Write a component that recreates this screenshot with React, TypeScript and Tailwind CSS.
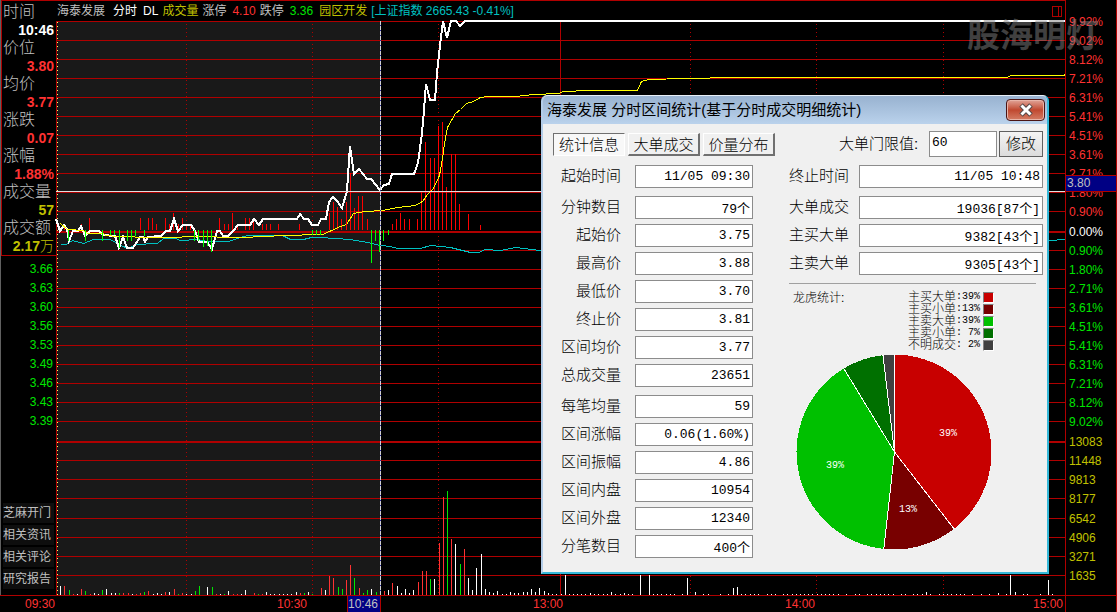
import React from 'react';

type Bar = [number, number];

const RED = '#b00000';

/* ---------- chart data ---------- */

const gridLines = [
  21, 40, 59, 78, 97, 116, 135, 154, 173, 192, 211, 250, 269, 288, 307, 326, 345, 364, 383, 402, 421,
  460, 479, 498, 518, 537, 556, 575,
];

const priceLine =
  '56,219 60,231 64,225 67,229 69,241 73,231 78,231 81,226 85,236 90,231 99,231 103,235 115,236 119,248 123,237 127,248 133,248 140,237 143,237 145,242 148,237 161,236 166,231 170,231 174,219 178,231 183,225 191,225 195,231 199,242 207,242 212,249 217,231 220,231 223,236 228,236 233,231 238,225 250,225 254,219 259,225 263,219 297,219 300,214 304,219 308,219 312,225 318,225 321,219 326,219 329,202 333,197 337,201 342,208 347,191 350,146 354,174 359,169 367,179 371,179 380,190 384,185 389,184 392,174 414,174 418,163 422,133 424,110 426,84 430,100 435,100 437,73 441,37 443,21 447,38 451,21 456,21 460,26 465,21 1065,21';

const averageLine =
  '60,223 67,229 83,230 87,233 103,233 105,235 118,236 150,237 170,237 193,236 240,237 265,236 282,235 322,234 329,231 340,226 346,224 353,213 365,211 382,210 397,207 415,205 422,201 427,194 433,188 439,175 442,158 444,143 447,127 455,113 460,109 466,103 473,101 480,97 487,96 515,96 533,94 558,93 563,91 588,90 637,90 641,81 648,79 685,78 735,77 1007,77 1010,75 1063,75 1065,74';

const indexLine =
  '60,244 66,244 72,240 83,243 93,239 110,239 120,245 128,248 135,244 157,243 163,238 175,238 180,240 197,239 207,241 228,241 237,238 247,235 282,235 290,239 303,239 311,237 320,237 350,239 367,242 380,245 390,246 397,248 420,248 430,245 450,247 470,252 478,252 485,249 500,250 515,247 540,250 1048,240 1065,239';

// x, top
const upBars: Bar[] = [
  [64, 224], [81, 224], [89, 218], [140, 218], [148, 218], [152, 218], [156, 224], [165, 218], [169, 224],
  [173, 213], [178, 224], [182, 218], [186, 224], [190, 224], [219, 218], [224, 224], [228, 224], [232, 213],
  [237, 224], [245, 218], [249, 218], [253, 218], [262, 224], [266, 224], [270, 224], [278, 224], [299, 224],
  [329, 213], [333, 202], [337, 207], [341, 219], [346, 202], [350, 173], [354, 208], [358, 196], [362, 196],
  [367, 219], [392, 224], [396, 219], [400, 213], [404, 219], [409, 219], [417, 219], [421, 192], [425, 142],
  [430, 158], [434, 158], [438, 126], [442, 122], [446, 187], [451, 154], [455, 154], [459, 204], [468, 214],
  [480, 225],
];

// x, bottom
const downBars: Bar[] = [
  [68, 241], [85, 241], [102, 241], [110, 235], [114, 235], [119, 248], [127, 241], [131, 241], [135, 236],
  [144, 236], [194, 241], [198, 241], [203, 247], [207, 246], [211, 252], [312, 235], [316, 235], [320, 235],
  [371, 263], [375, 241], [379, 252], [383, 241], [388, 235],
];

const volume: Record<string, Bar[]> = {
  '#ff3232': [
    [64, 586], [73, 594], [81, 589], [90, 594], [123, 593], [128, 593], [136, 594], [140, 593], [148, 591],
    [165, 592], [174, 589], [182, 593], [216, 594], [233, 594], [237, 594], [254, 593], [262, 594], [300, 593],
    [321, 588], [329, 576], [333, 578], [346, 580], [350, 565], [359, 588], [384, 591], [392, 583], [418, 582],
    [422, 571], [426, 571], [439, 543], [443, 497], [451, 539], [464, 549],
  ],
  '#00e600': [
    [69, 590], [85, 591], [102, 590], [119, 593], [144, 592], [178, 594], [195, 591], [199, 586], [212, 587],
    [224, 594], [258, 594], [304, 593], [312, 594], [338, 587], [342, 589], [354, 578], [363, 593], [367, 590],
    [376, 592], [430, 579], [447, 491], [460, 564],
  ],
  '#ffffff': [
    [60, 586], [77, 594], [94, 593], [98, 594], [106, 589], [111, 593], [115, 593], [132, 594], [153, 594],
    [157, 593], [161, 594], [169, 592], [186, 594], [191, 594], [207, 587], [220, 594], [228, 591], [241, 594],
    [245, 590], [266, 592], [270, 594], [274, 594], [279, 594], [283, 594], [287, 594], [291, 594], [296, 592],
    [308, 592], [325, 590], [371, 589], [388, 590], [397, 586], [401, 593], [405, 589], [409, 593], [413, 590],
    [434, 579], [455, 544], [468, 578], [472, 590], [476, 568], [481, 554], [485, 589], [489, 592], [493, 593],
    [497, 591], [502, 594], [506, 594], [510, 592], [514, 593], [518, 593], [523, 592], [527, 592], [531, 589],
    [535, 592], [539, 588], [544, 591], [548, 593], [565, 575], [590, 593], [611, 592], [624, 593], [640, 575],
    [649, 575], [687, 578], [695, 592], [733, 588], [737, 587], [926, 592], [998, 593], [1010, 575],
    [1015, 592], [1048, 580],
  ],
};

const ticks = [
  552, 556, 561, 569, 573, 577, 581, 585, 594, 598, 603, 607, 615, 620, 628, 632, 653, 657, 661, 666, 670, 674,
  682, 703, 708, 720, 728, 741, 745, 750, 754, 758, 767, 771, 775, 783, 787, 792, 796, 800, 804, 808, 812, 817,
  821, 825, 829, 833, 838, 846, 855, 859, 867, 871, 876, 880, 884, 888, 893, 901, 905, 913, 917, 922, 930, 939,
  943, 947, 951, 956, 960, 964, 972, 981, 989, 1006, 1023, 1027, 1040, 1052,
];

/* ---------- labels ---------- */

const quote = [
  { label: '时间', value: '10:46', color: 'text-white' },
  { label: '价位', value: '3.80', color: 'text-[#ff3232]' },
  { label: '均价', value: '3.77', color: 'text-[#ff3232]' },
  { label: '涨跌', value: '0.07', color: 'text-[#ff3232]' },
  { label: '涨幅', value: '1.88%', color: 'text-[#ff3232]' },
  { label: '成交量', value: '57', color: 'text-[#c0c000]' },
  { label: '成交额', value: '2.17', unit: '万', color: 'text-[#c0c000]' },
];

const lowPrices = ['3.66', '3.63', '3.60', '3.56', '3.53', '3.49', '3.46', '3.43', '3.39'];
const links = ['芝麻开门', '相关资讯', '相关评论', '研究报告'];

const upPercents = ['9.92%', '9.02%', '8.12%', '7.21%', '6.31%', '5.41%', '4.51%', '3.61%', '2.71%', '1.80%', '0.90%'];
const downPercents = ['0.90%', '1.80%', '2.71%', '3.61%', '4.51%', '5.41%', '6.31%', '7.21%', '8.12%', '9.02%'];

const leftGroups: [string, string][][] = [
  [['起始时间', '11/05 09:30']],
  [
    ['分钟数目', '79个'],
    ['起始价', '3.75'],
    ['最高价', '3.88'],
    ['最低价', '3.70'],
    ['终止价', '3.81'],
    ['区间均价', '3.77'],
    ['总成交量', '23651'],
  ],
  [
    ['每笔均量', '59'],
    ['区间涨幅', '0.06(1.60%)'],
    ['区间振幅', '4.86'],
    ['区间内盘', '10954'],
    ['区间外盘', '12340'],
    ['分笔数目', '400个'],
  ],
];

const rightGroups: [string, string][][] = [
  [['终止时间', '11/05 10:48']],
  [
    ['大单成交', '19036[87个]'],
    ['主买大单', '9382[43个]'],
    ['主卖大单', '9305[43个]'],
  ],
];

const legend = [
  { label: '主买大单', value: ':39%', swatch: 'bg-[#c80000]' },
  { label: '主买小单', value: ':13%', swatch: 'bg-[#780000]' },
  { label: '主卖大单', value: ':39%', swatch: 'bg-[#00c000]' },
  { label: '主卖小单', value: ': 7%', swatch: 'bg-[#007000]' },
  { label: '不明成交', value: ': 2%', swatch: 'bg-[#404040]' },
];

const slices = [
  { from: 0, to: 142, color: '#c80000' },
  { from: 142, to: 186, color: '#780000' },
  { from: 186, to: 329, color: '#00c000' },
  { from: 329, to: 353.5, color: '#007000' },
  { from: 353.5, to: 360, color: '#404040' },
];

/* ---------- chart ---------- */

const Chart: React.FC = () => (
  <svg
    className="block w-full h-[574px] overflow-visible"
    viewBox="56 21 1009 574"
    preserveAspectRatio="none"
    shapeRendering="crispEdges"
    fill="none"
  >
    <rect x="57" y="21" width="323" height="574" fill="#191919" />

    {gridLines.map((y) => (
      <rect key={y} x="56" y={y} width="1009" height="1" fill={RED} />
    ))}
    <rect x="56" y="231" width="1009" height="2" fill={RED} />
    <rect x="56" y="441" width="1009" height="2" fill={RED} />

    {[186, 312, 438, 690, 816, 943].map((x) => (
      <path key={x} d={`M${x + 0.5} 24V595`} stroke={RED} strokeDasharray="1 3" />
    ))}
    <rect x="56" y="21" width="1" height="574" fill={RED} />
    <rect x="560" y="21" width="1" height="574" fill={RED} />
    <path d="M57.5 22V595" stroke="#ffff64" strokeDasharray="1 3" />

    {upBars.map(([x, y]) => (
      <rect key={x} x={x} y={y} width="1" height={230 - y} fill="#ff0000" />
    ))}

    <polyline points={indexLine} stroke="#00c0c0" transform="translate(0.5 0.5)" />
    <polyline points={priceLine} stroke="#fff" strokeWidth="2" />
    <polyline points={averageLine} stroke="#ffff00" transform="translate(0.5 0.5)" />

    {downBars.map(([x, y]) => (
      <rect key={x} x={x} y="230" width="1" height={y - 230} fill="#00ff00" />
    ))}

    {Object.entries(volume).map(([color, bars]) =>
      bars.map(([x, y]) => <rect key={x} x={x} y={y} width="1" height={595 - y} fill={color} />)
    )}
    {ticks.map((x) => (
      <rect key={x} x={x} y="594" width="1" height="1" fill="#fff" />
    ))}

    {/* Crosshair */}
    <rect x="56" y="191" width="1009" height="1" fill="#e0e0e0" />
    <rect x="380" y="21" width="1" height="574" fill="#2828a0" />
    <path d="M380.5 21V595" stroke="#d0d0d0" strokeDasharray="4 1" />
  </svg>
);

const QuotePanel: React.FC = () => (
  <aside className="w-14 shrink-0 flex flex-col border-l border-[#606060]">
    <dl className="border border-r-0 border-[#b00000] pt-0.5 pl-px">
      {quote.map((q) => (
        <div key={q.label}>
          <dt className="h-[18px] text-base leading-[18px] font-light text-[#c0c0c0]">{q.label}</dt>
          <dd className={`h-[18px] text-sm leading-[18px] font-bold text-right pr-0.5 whitespace-nowrap ${q.color}`}>
            {q.value}
            {q.unit && <span className="font-light">{q.unit}</span>}
          </dd>
        </div>
      ))}
    </dl>
    <ul className="pt-1 pr-[3px] text-right text-xs text-[#00e600]">
      {lowPrices.map((p) => (
        <li key={p} className="h-[19px] leading-[19px]">{p}</li>
      ))}
    </ul>
    <nav className="mt-auto mb-1.5 ml-0.5 mr-0.5 flex flex-col gap-0.5 text-xs text-[#c0c0c0]">
      {links.map((l) => (
        <a key={l} href="#" className="h-5 leading-5 bg-[#0e0e0e] whitespace-nowrap">{l}</a>
      ))}
    </nav>
  </aside>
);

const ScalePanel: React.FC = () => (
  <aside className="relative w-13 shrink-0 border-x border-[#b00000] pt-[13px] pl-[3px] text-xs">
    <ul className="text-[#ff3232]">
      {upPercents.map((p) => (
        <li key={p} className="h-[19px] leading-[19px]">{p}</li>
      ))}
    </ul>
    <p className="h-5 leading-5 text-white">0.00%</p>
    <ul className="text-[#00e600]">
      {downPercents.map((p) => (
        <li key={p} className="h-[19px] leading-[19px]">{p}</li>
      ))}
    </ul>
    <ul className="text-[#c0c000]">
      <li className="h-5 leading-5">13083</li>
      <li className="h-[19px] leading-[19px]">11448</li>
      <li className="h-[19px] leading-[19px]">9813</li>
      <li className="h-[19px] leading-[19px]">8177</li>
      <li className="h-5 leading-5">6542</li>
      <li className="h-[19px] leading-[19px]">4906</li>
      <li className="h-[19px] leading-[19px]">3271</li>
      <li className="h-[19px] leading-[19px]">1635</li>
    </ul>
    <span className="absolute left-0 right-0 top-[175px] h-[17px] leading-[15px] border-y border-[#b00000] bg-[#000084] pl-px text-[#c0c0c0]">
      3.80
    </span>
  </aside>
);

/* ---------- dialog ---------- */

const Field: React.FC<{ id: string; label: string; value: string; width: string }> = ({ id, label, value, width }) => (
  <div className="flex items-center h-[23px]">
    <label htmlFor={id} className="w-15 text-right text-[15px] font-light whitespace-nowrap">{label}</label>
    <input
      id={id}
      readOnly
      defaultValue={value}
      className={`h-[23px] border border-[#8c8c8c] bg-white px-0.5 text-right font-['Liberation_Mono','Noto_Sans_CJK_SC',monospace] text-[13px] leading-5 outline-none ${width}`}
    />
  </div>
);

const Fields: React.FC<{ groups: [string, string][][]; prefix: string; width: string }> = ({ groups, prefix, width }) => (
  <div className="flex flex-col gap-2">
    {groups.map((group, g) => (
      <div key={g} className="flex flex-col gap-[5px]">
        {group.map(([label, value]) => (
          <Field key={label} id={`${prefix}-${label}`} label={label} value={value} width={width} />
        ))}
      </div>
    ))}
  </div>
);

const point = (deg: number) => {
  const a = (deg * Math.PI) / 180;
  return `${98 + 97.5 * Math.sin(a)} ${98 - 97.5 * Math.cos(a)}`;
};

const Pie: React.FC = () => (
  <svg className="block w-[196px] h-[196px]" viewBox="0 0 196 196">
    {slices.map((s) => (
      <path
        key={s.from}
        d={`M98 98L${point(s.from)}A97.5 97.5 0 ${s.to - s.from > 180 ? 1 : 0} 1 ${point(s.to)}Z`}
        fill={s.color}
        shapeRendering="crispEdges"
      />
    ))}
    {slices.map((s) => (
      <path key={s.from} d={`M98.5 98L${point(s.from)}`} stroke="#fff" shapeRendering="crispEdges" />
    ))}
    <g fill="#fff" fontSize="10" textAnchor="middle" fontFamily="'Liberation Mono', monospace">
      <text x="152" y="82">39%</text>
      <text x="112" y="158">13%</text>
      <text x="39" y="114">39%</text>
    </g>
  </svg>
);

const StatsDialog: React.FC = () => (
  <section
    role="dialog"
    aria-labelledby="stats-title"
    className="absolute left-[541px] top-[95px] w-[508px] rounded-t-md border-2 border-t border-l-[#b4cde8] border-t-[#e8f0f8] border-r-[#34b8d8] border-b-[#34b8d8] bg-[#f0f0f0] text-black overflow-hidden"
  >
    <header className="h-7 flex items-center justify-between pl-1 pr-0.5 bg-linear-to-b from-[#98b2d0] to-[#bad2ec]">
      <h1 id="stats-title" className="text-[15px] whitespace-nowrap">
        海泰发展 分时区间统计(基于分时成交明细统计)
      </h1>
      <button
        type="button"
        aria-label="关闭"
        className="w-[39px] h-[22px] flex items-center justify-center rounded-sm border border-[#4a1414] bg-linear-to-b from-[#e0a498] via-[#c04830] to-[#d47c64] shadow-[inset_0_0_0_1px_#e8b4a8]"
      >
        <svg className="w-4 h-3.5" viewBox="0 0 16 14">
          <path d="M3 2L13 12M13 2L3 12" stroke="#544848" strokeWidth="5" />
          <path d="M3.5 2.5L12.5 11.5M12.5 2.5L3.5 11.5" stroke="#fff" strokeWidth="3" />
        </svg>
      </button>
    </header>

    <div className="pt-1.5 pb-3.5 pl-2.5 pr-1">
      <div className="h-7 flex items-center justify-between">
        <div className="flex gap-[3px] text-[15px] font-light">
          <button
            type="button"
            className="w-[72px] h-[23px] leading-[21px] border border-t-[#707070] border-l-[#707070] border-r-white border-b-white bg-[#f8f8f8]"
          >
            统计信息
          </button>
          <button
            type="button"
            className="w-[72px] h-[23px] leading-[21px] border border-r-2 border-t-white border-l-white border-b-2 border-r-[#707070] border-b-[#707070]"
          >
            大单成交
          </button>
          <button
            type="button"
            className="w-[72px] h-[23px] leading-[21px] border border-r-2 border-t-white border-l-white border-b-2 border-r-[#707070] border-b-[#707070]"
          >
            价量分布
          </button>
        </div>
        <div className="flex items-center">
          <label htmlFor="threshold" className="w-[90px] text-[15px] font-light whitespace-nowrap">大单门限值:</label>
          <input
            id="threshold"
            defaultValue="60"
            className="w-[68px] h-[26px] border border-[#8c8c8c] bg-white px-0.5 pb-1 text-[13px] font-['Liberation_Mono',monospace] outline-none"
          />
          <button
            type="button"
            className="ml-0.5 w-11 h-[26px] border border-[#606060] bg-linear-to-b from-[#f4f4f4] to-[#dcdcdc] text-[15px] leading-5 font-light"
          >
            修改
          </button>
        </div>
      </div>

      <div className="mt-[7px] pl-2 flex justify-between">
        <Fields groups={leftGroups} prefix="l" width="w-[118px] ml-[14px]" />
        <div className="w-[254px]">
          <Fields groups={rightGroups} prefix="r" width="w-[184px] ml-2.5" />
          <hr className="mt-2 mr-[7px] border-t-[#a0a0a0]" />
          <div className="mt-1.5 pl-1 pr-[49px] flex justify-between text-xs font-light">
            <h2 className="h-4 leading-4">龙虎统计:</h2>
            <ul className="pt-px">
              {legend.map((l) => (
                <li key={l.label} className="h-3 flex items-center leading-3 whitespace-pre">
                  {l.label}
                  <span className="font-['Liberation_Mono',monospace] text-[10px]">{l.value}</span>
                  <i className={`ml-[3px] w-[11px] h-[11px] border border-t-[#808080] border-l-[#808080] border-r-white border-b-white ${l.swatch}`} />
                </li>
              ))}
            </ul>
          </div>
          <div className="mt-[3px] pl-[7px]">
            <Pie />
          </div>
        </div>
      </div>
    </div>
  </section>
);

export default function App() {
  return (
    <main className="relative min-h-screen overflow-hidden bg-black font-['Liberation_Sans','Noto_Sans_CJK_SC',sans-serif]">
      <div className="flex">
        <QuotePanel />
        <div className="flex-1 min-w-0">
          <header className="h-[21px] flex items-center justify-between border-t border-[#b00000] pl-px pr-0.5 text-xs text-[#c0c0c0] whitespace-nowrap">
            <div className="flex items-center">
              <span className="mr-2">海泰发展</span>
              <span className="mr-1.5 text-white">分时</span>
              <span className="mr-1 text-white">DL</span>
              <span className="mr-1 text-[#c0c000]">成交量</span>
              <span className="mr-1.5">涨停</span>
              <span className="mr-1 text-[#ff3232]">4.10</span>
              <span className="mr-1.5">跌停</span>
              <span className="mr-1.5 text-[#00e600]">3.36</span>
              <span className="mr-1 text-[#c0c000]">园区开发</span>
              <span className="text-[#00c0c0]">[上证指数 2665.43 -0.41%]</span>
            </div>
            <svg className="w-[11px] h-[11px]" viewBox="0 0 11 11" fill="none" stroke={RED} shapeRendering="crispEdges">
              <path d="M.5 .5H9.5V10.5H.5ZM6.5 .5V10.5" />
            </svg>
          </header>
          <Chart />
        </div>
        <ScalePanel />
      </div>

      <footer className="relative h-[17px] border-t border-[#b00000] text-xs leading-4 text-[#ff3232]">
        <div className="grid grid-cols-[252fr_256fr_252fr_248fr_84fr] pl-[25px]">
          <time>09:30</time>
          <time>10:30</time>
          <time>13:00</time>
          <time>14:00</time>
          <time>15:00</time>
        </div>
        <time className="absolute left-[347px] top-0 h-4 w-[34px] border-x border-[#b00000] bg-[#000084] text-[#c0c0c0]">
          10:46
        </time>
        <i className="absolute right-0 top-0 h-4 w-13 border-x border-[#b00000]" />
      </footer>

      <span className="absolute right-[18px] top-4 text-[33px] leading-10 font-bold text-[#808080]/50 pointer-events-none">
        股海明灯
      </span>

      <StatsDialog />
    </main>
  );
}
